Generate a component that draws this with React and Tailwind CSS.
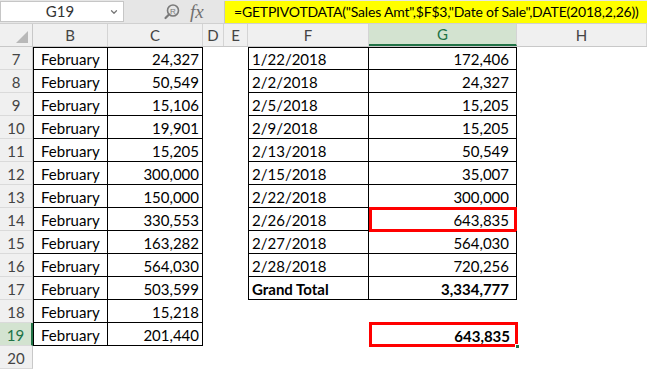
import { ChevronDown } from 'lucide-react'

const cols = [
  { key: 'B', w: 'w-[75px]' },
  { key: 'C', w: 'w-[95px]' },
  { key: 'D', w: 'w-[21px]' },
  { key: 'E', w: 'w-[24px]' },
  { key: 'F', w: 'w-[121px]' },
  { key: 'G', w: 'w-[148px]' },
  { key: 'H', w: 'flex-1' },
]

const left = [
  [7, '24,327'],
  [8, '50,549'],
  [9, '15,106'],
  [10, '19,901'],
  [11, '15,205'],
  [12, '300,000'],
  [13, '150,000'],
  [14, '330,553'],
  [15, '163,282'],
  [16, '564,030'],
  [17, '503,599'],
  [18, '15,218'],
  [19, '201,440'],
]

const pivot = {
  7: ['1/22/2018', '172,406'],
  8: ['2/2/2018', '24,327'],
  9: ['2/5/2018', '15,205'],
  10: ['2/9/2018', '15,205'],
  11: ['2/13/2018', '50,549'],
  12: ['2/15/2018', '35,007'],
  13: ['2/22/2018', '300,000'],
  14: ['2/26/2018', '643,835'],
  15: ['2/27/2018', '564,030'],
  16: ['2/28/2018', '720,256'],
  17: ['Grand Total', '3,334,777'],
}

function SearchIcon() {
  return (
    <svg width="18" height="18" viewBox="0 0 18 18" fill="none" stroke="#7a7a7a">
      <circle cx="10" cy="7.5" r="5.5" strokeWidth="1.6" />
      <path d="M6 11.5 L2.5 15" strokeWidth="2.2" strokeLinecap="round" />
      <text x="10" y="10.5" fontSize="8" textAnchor="middle" fill="#7a7a7a" stroke="none" fontFamily="Liberation Sans, sans-serif">R</text>
    </svg>
  )
}

function Row({ n }) {
  const l = left.find((r) => r[0] === n)
  const p = pivot[n]
  const active = n === 19
  const bold = n === 17
  return (
    <div className="flex h-[23px] shrink-0">
      <div
        className={`w-[33px] shrink-0 flex items-end justify-center pb-[2px] border-b border-[#dadada] ${
          active
            ? 'bg-[#d3e3d0] text-[#217346] border-r-2 border-r-[#217346]'
            : 'bg-[#f0f0f0] text-[#444] border-r border-r-[#c8c8c8]'
        }`}
      >
        {n}
      </div>
      {/* B */}
      <div
        className={`w-[75px] shrink-0 flex items-end pb-[2px] pl-[7px] text-black ${
          l ? `border-l border-r border-b border-black ${n === 7 ? 'border-t' : ''}` : ''
        }`}
      >
        {l ? 'February' : ''}
      </div>
      {/* C */}
      <div
        className={`w-[95px] shrink-0 flex items-end justify-end pb-[2px] pr-[3px] text-black ${
          l ? `border-r border-b border-black ${n === 7 ? 'border-t' : ''}` : ''
        }`}
      >
        {l ? l[1] : ''}
      </div>
      <div className="w-[21px] shrink-0" />
      <div className="w-[24px] shrink-0" />
      {/* F */}
      <div
        className={`w-[121px] shrink-0 flex items-end pb-[2px] pl-[3px] text-black ${
          p ? `border-l border-r border-b border-black ${n === 7 ? 'border-t' : ''}` : ''
        } ${bold ? 'font-bold' : ''}`}
      >
        {p ? p[0] : ''}
      </div>
      {/* G */}
      <div
        className={`relative w-[148px] shrink-0 flex items-end justify-end pb-[2px] pr-[7px] text-black ${
          p ? `border-r border-b border-black ${n === 7 ? 'border-t' : ''}` : ''
        } ${bold || active ? 'font-bold' : ''}`}
      >
        {p ? p[1] : active ? '643,835' : ''}
        {n === 14 && (
          <div className="absolute -top-px left-0 -right-px -bottom-[2px] border-[3px] border-[#ff0000]" />
        )}
        {active && (
          <>
            <div className="absolute -top-px left-0 -right-px -bottom-px border-[3px] border-[#ff0000]" />
            <div className="absolute -right-[3px] -bottom-[3px] w-[5px] h-[5px] bg-[#217346] border border-white" />
          </>
        )}
      </div>
      <div className="flex-1" />
    </div>
  )
}

export default function App() {
  const rows = [7, 8, 9, 10, 11, 12, 13, 14, 15, 16, 17, 18, 19, 20]
  return (
    <div className="w-[647px] h-[370px] overflow-hidden bg-white font-['Lato',sans-serif] text-[15px] leading-none flex flex-col">
      {/* formula bar */}
      <div className="h-[24px] shrink-0 flex items-center bg-[#e6e6e6] border-b border-[#d0d0d0]">
        <div className="w-[124px] shrink-0 h-[21px] bg-white border border-[#c6c6c6] flex items-center relative">
          <span className="w-full text-center pr-[4px] text-[#333]">G19</span>
          <ChevronDown size={10} strokeWidth={3} className="absolute right-[4px] text-[#777]" />
        </div>
        <div className="w-[100px] shrink-0 flex items-center gap-[9px] pl-[39px]">
          <SearchIcon />
          <span className="font-['Liberation_Serif',serif] italic text-[19px] text-[#707070]">fx</span>
        </div>
        <div className="flex-1 min-w-0 overflow-hidden h-[22px] bg-[#ffff00] border-l border-[#c6c6c6] flex items-center pl-[9px] whitespace-nowrap text-black text-[14px] tracking-[-0.2px]">
          =GETPIVOTDATA("Sales Amt",$F$3,"Date of Sale",DATE(2018,2,26))
        </div>
      </div>

      {/* column headers */}
      <div className="flex h-[23px] shrink-0 bg-[#f0f0f0] border-b border-[#c8c8c8] text-[#444]">
        <div className="w-[33px] shrink-0 border-r border-[#c8c8c8] relative">
          <div className="absolute right-[4px] bottom-[3px] w-0 h-0 border-l-[12px] border-l-transparent border-b-[12px] border-b-[#b8b8b8]" />
        </div>
        {cols.map((c) => (
          <div
            key={c.key}
            className={`${c.w} shrink-0 flex items-center justify-center border-r border-[#d4d4d4] ${
              c.key === 'G' ? 'bg-[#d3e3d0] text-[#217346] border-b-2 border-b-[#217346]' : ''
            }`}
          >
            {c.key}
          </div>
        ))}
      </div>

      {rows.map((n) => (
        <Row key={n} n={n} />
      ))}
    </div>
  )
}
